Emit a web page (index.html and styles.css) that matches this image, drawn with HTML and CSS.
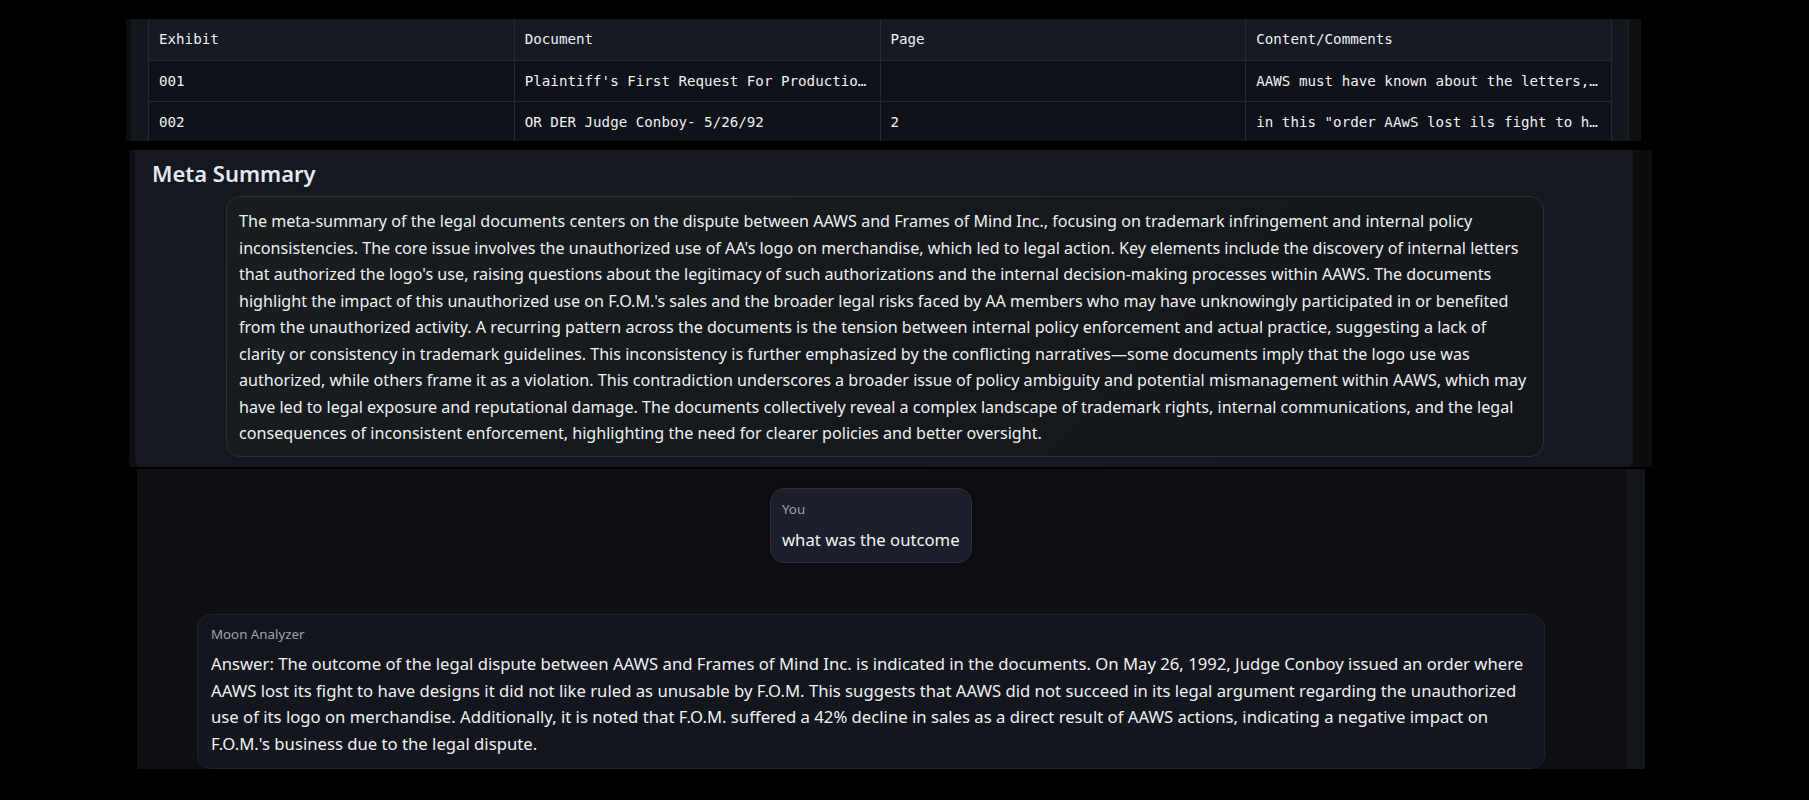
FILE: index.html
```html
<!DOCTYPE html>
<html lang="en">
<head>
<meta charset="utf-8">
<title>Moon Analyzer</title>
<link rel="stylesheet" href="styles.css">
</head>
<body>
<div class="page">
  <section class="table-panel">
    <div class="table-wrap">
      <table class="exhibits">
        <thead>
          <tr><th>Exhibit</th><th>Document</th><th>Page</th><th>Content/Comments</th></tr>
        </thead>
        <tbody>
          <tr><td>001</td><td>Plaintiff's First Request For Productio…</td><td></td><td>AAWS must have known about the letters,…</td></tr>
          <tr><td>002</td><td>OR DER Judge Conboy- 5/26/92</td><td>2</td><td>in this "order AAwS lost ils fight to h…</td></tr>
        </tbody>
      </table>
    </div>
    <div class="scroll-track"></div>
  </section>

  <section class="meta-panel">
    <div class="meta-inner">
      <h2 class="meta-title">Meta Summary</h2>
      <div class="summary-box">
        <p class="summary-text">The meta-summary of the legal documents centers on the dispute between AAWS and Frames of Mind Inc., focusing on trademark infringement and internal policy<br>inconsistencies. The core issue involves the unauthorized use of AA's logo on merchandise, which led to legal action. Key elements include the discovery of internal letters<br>that authorized the logo's use, raising questions about the legitimacy of such authorizations and the internal decision-making processes within AAWS. The documents<br>highlight the impact of this unauthorized use on F.O.M.'s sales and the broader legal risks faced by AA members who may have unknowingly participated in or benefited<br>from the unauthorized activity. A recurring pattern across the documents is the tension between internal policy enforcement and actual practice, suggesting a lack of<br>clarity or consistency in trademark guidelines. This inconsistency is further emphasized by the conflicting narratives—some documents imply that the logo use was<br>authorized, while others frame it as a violation. This contradiction underscores a broader issue of policy ambiguity and potential mismanagement within AAWS, which may<br>have led to legal exposure and reputational damage. The documents collectively reveal a complex landscape of trademark rights, internal communications, and the legal<br>consequences of inconsistent enforcement, highlighting the need for clearer policies and better oversight.</p>
      </div>
    </div>
    <div class="scroll-track dark"></div>
  </section>

  <section class="chat-panel">
    <div class="chat-body">
      <div class="chat-column">
        <div class="msg-row user">
          <div class="bubble user-bubble">
            <div class="sender">You</div>
            <div class="user-text">what was the outcome</div>
          </div>
        </div>
        <div class="bubble bot-bubble">
          <div class="sender">Moon Analyzer</div>
          <p class="bot-text">Answer: The outcome of the legal dispute between AAWS and Frames of Mind Inc. is indicated in the documents. On May 26, 1992, Judge Conboy issued an order where<br>AAWS lost its fight to have designs it did not like ruled as unusable by F.O.M. This suggests that AAWS did not succeed in its legal argument regarding the unauthorized<br>use of its logo on merchandise. Additionally, it is noted that F.O.M. suffered a 42% decline in sales as a direct result of AAWS actions, indicating a negative impact on<br>F.O.M.'s business due to the legal dispute.</p>
        </div>
      </div>
    </div>
    <div class="scroll-track chat-track"></div>
  </section>
</div>
</body>
</html>
```

FILE: styles.css
```css
* { box-sizing: border-box; }

html, body {
  margin: 0;
  padding: 0;
  background: #000;
  height: 100%;
  overflow: hidden;
}

body {
  font-family: "Noto Sans", "Open Sans", sans-serif;
  color: #e8e9ec;
}

.page {
  padding-top: 19px;
  display: flex;
  flex-direction: column;
}

/* ---------- table panel ---------- */
.table-panel {
  margin-left: 126px;
  width: 1515px;
  height: 122px;
  display: flex;
  background: #0c0d10;
  padding-left: 5px;
  overflow: hidden;
}

.table-wrap {
  flex: 1;
  background: #14171d;
  padding: 0 16px 0 17px;
  overflow: hidden;
}

.scroll-track {
  width: 13px;
  background: #0e0f12;
  border-left: 1px solid #1e222a;
}

.exhibits {
  width: 100%;
  table-layout: fixed;
  border-collapse: collapse;
  font-family: "DejaVu Sans Mono", "Liberation Mono", monospace;
  font-size: 14.2px;
  color: #eef0f3;
}

.exhibits th,
.exhibits td {
  border: 1px solid #242934;
  height: 41px;
  padding: 0 10px;
  text-align: left;
  font-weight: normal;
  white-space: nowrap;
  overflow: hidden;
  vertical-align: middle;
}

.exhibits th {
  background: #161a23;
  border-top: none;
}

.exhibits td {
  background: #0f1218;
}

/* ---------- meta summary ---------- */
.meta-panel {
  margin-top: 9px;
  margin-left: 129px;
  width: 1523px;
  height: 317px;
  display: flex;
  background: #0d0f12;
  padding-left: 6px;
}

.meta-inner {
  flex: 1;
  background: linear-gradient(90deg, #15181f 0%, #171b21 60%, #15181e 100%);
  border-radius: 0 0 8px 8px;
  padding: 9px 0 0 17px;
}

.scroll-track.dark {
  width: 19px;
  background: #0b0c0e;
  border-left: none;
}

.meta-title {
  margin: 0;
  font-size: 22px;
  line-height: 28px;
  font-weight: 600;
  color: #e4e7ee;
}

.summary-box {
  margin: 9px 0 0 74px;
  width: 1318px;
  height: 261px;
  border: 1px solid #283331;
  border-radius: 14px;
  background: linear-gradient(135deg, #181d20 0%, #15191c 60%, #13171b 100%);
  padding: 11px 12px;
}

.summary-text {
  margin: 0;
  font-size: 16.13px;
  line-height: 26.5px;
  white-space: nowrap;
  color: #eef0f2;
}

/* ---------- chat ---------- */
.chat-panel {
  margin-top: 2px;
  margin-left: 137px;
  width: 1508px;
  height: 300px;
  display: flex;
  background: #0e1015;
  overflow: hidden;
}

.chat-body {
  flex: 1;
  padding: 19px 0 0 60px;
}

.scroll-track.chat-track {
  width: 18px;
  background: #13161b;
  border-left: none;
}

.chat-column {
  width: 1348px;
  display: flex;
  flex-direction: column;
  gap: 51px;
}

.msg-row.user {
  display: flex;
  justify-content: center;
}

.bubble {
  border-radius: 14px;
}

.user-bubble {
  width: 202px;
  height: 75px;
  background: #1b1f29;
  border: 1px solid #2a2f40;
  padding: 11px 11px;
  box-shadow: 0 0 12px rgba(0, 0, 0, 0.35);
}

.sender {
  font-size: 13.3px;
  line-height: 18px;
  color: #9da2ab;
}

.user-text {
  margin-top: 11px;
  font-size: 16.7px;
  line-height: 22px;
  color: #f1f2f4;
}

.bot-bubble {
  height: 155px;
  background: #13161c;
  border: 1px solid #1f232c;
  padding: 10px 13px;
}

.bot-text {
  margin: 8px 0 0;
  font-size: 16.7px;
  line-height: 26.5px;
  white-space: nowrap;
  color: #eef0f2;
}
```
